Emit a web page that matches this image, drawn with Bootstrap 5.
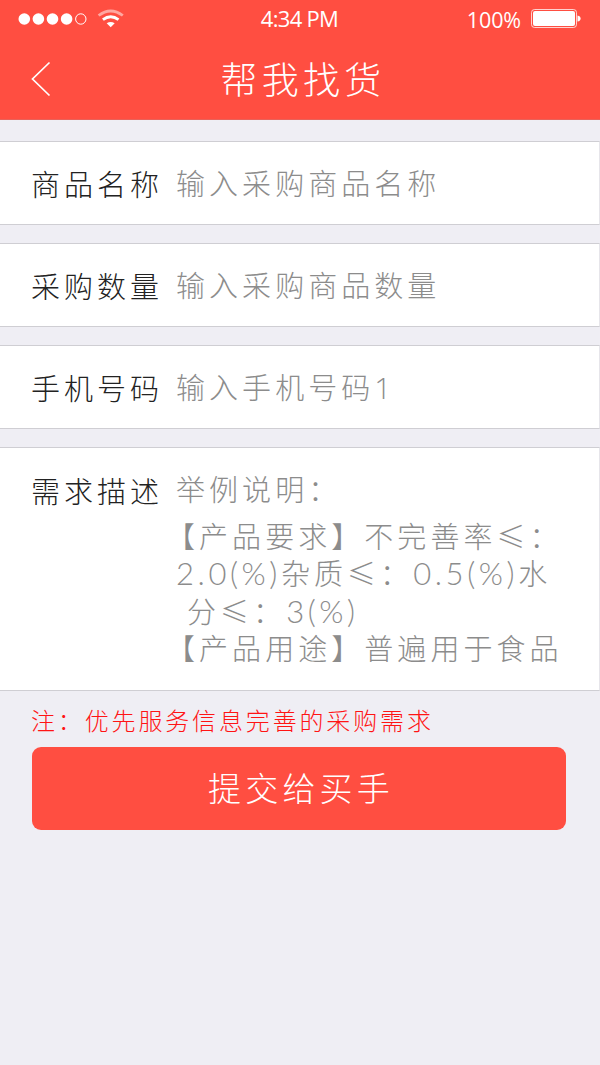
<!DOCTYPE html>
<html lang="zh-CN">
<head>
<meta charset="utf-8">
<meta name="viewport" content="width=device-width, initial-scale=1">
<title>帮我找货</title>
<link rel="stylesheet" href="https://cdn.jsdelivr.net/npm/bootstrap@5.3.0/dist/css/bootstrap.min.css">
<style>
body { background: #efeef4; font-family: "Noto Sans CJK SC", sans-serif; font-weight: 300; min-height: 1065px; overflow-x: hidden; }
.app-head { background: #ff4e41; height: 120px; border-bottom: 1px solid #e8625a; }
.status-bar { height: 38px; padding: 0 19px 0 18px; font: 400 22px/38px "Open Sans", "Noto Sans", sans-serif; }
.status-bar > div { flex: 1 1 0; }
.clock { font-size: 22px; letter-spacing: -.7px; line-height: 36px; height: 38px; }
.level { font-size: 21.5px; letter-spacing: -.1px; padding-top: 1px; }
.title-bar { height: 82px; padding: 0 28px 0 31px; }
.title-bar h1 { font-size: 37px; font-weight: 300; line-height: 80px; height: 82px; letter-spacing: 4.3px; padding-left: 3px; }
.side { width: 40px; }
.form-rows { padding-top: 21px; }
.field { background: #fff; border: 1px solid #cfced3; border-left: 0; border-right-color: #e6e5ea; height: 84px; margin-bottom: 18px; padding-left: 31px; font-size: 29px; letter-spacing: 4px; line-height: 82px; white-space: nowrap; }
.field-label { width: 145px; color: #222; flex: none; }
.hint { color: #8c8c8c; line-height: 80px; letter-spacing: 4.05px; }
.field-area { height: 244px; margin-bottom: 0; line-height: 40px; padding-top: 22px; }
.field-area .hint { line-height: 37.500px; }
.lead-line { margin-bottom: 9px; }
.hang { margin-left: -10px; }
.tail { padding-left: 11px; }
.latin { font-family: Lato, sans-serif; font-size: 31px; letter-spacing: 3.6px; line-height: 1; }
.one { font-family: "Open Sans", sans-serif; font-size: 30px; line-height: 1; }
.note { color: #ff1414; font-size: 24px; letter-spacing: 2.850px; line-height: 36px; padding: 11px 0 9px 31px; }
.btn-send, .btn-send:hover { background: #ff4e41; color: #fff; height: 83px; margin: 0 34px 0 32px; border: 0; border-radius: 9px; font-size: 33px; font-weight: 300; letter-spacing: 4.2px; width: 534px; padding: 0 0 2px 4px; }
</style>
</head>
<body>
<header class="app-head text-white">
  <div class="status-bar d-flex align-items-center">
    <div class="d-flex align-items-center">
      <svg width="110" height="26" viewBox="0 0 110 26" fill="#fff">
        <circle cx="6.3" cy="13" r="5.8"/><circle cx="20.4" cy="13" r="5.8"/><circle cx="34.5" cy="13" r="5.8"/><circle cx="48.6" cy="13" r="5.8"/>
        <circle cx="62.8" cy="13" r="5.2" fill="none" stroke="#fff" stroke-width="1"/>
        <g fill="none" stroke="#fff" stroke-width="2.8"><path d="M80.600 9.500Q92.700 .4 104.800 9.500" opacity=".5"/><path d="M84.900 13.700Q92.700 7.800 100.500 13.700"/></g>
        <path d="M88.700 17.300Q92.700 14.500 96.700 17.300L92.700 21.300Z"/>
      </svg>
    </div>
    <div class="clock text-center">4:34 PM</div>
    <div class="d-flex align-items-center justify-content-end">
      <span class="level me-2">100%</span>
      <svg width="52" height="22" viewBox="0 0 52 22"><rect x="2.500" y="1.500" width="45" height="18" rx="3" fill="none" stroke="#fff" stroke-opacity=".75"/><rect x="4" y="3" width="42" height="15" rx="2" fill="#fff"/><path d="M48.500 7.500Q51.600 8 51.600 10.500T48.500 13.500Z" fill="#fff"/></svg>
    </div>
  </div>
  <div class="title-bar d-flex justify-content-between align-items-center">
    <a class="side d-flex" href="#" aria-label="返回"><svg width="20" height="36" viewBox="0 0 20 36" fill="none" stroke="#fff" stroke-width="1.700"><path d="M18.500 1.500L1.500 18L18.500 34.500"/></svg></a>
    <h1 class="m-0">帮我找货</h1>
    <span class="side"></span>
  </div>
</header>
<main class="form-rows">
  <div class="field d-flex"><div class="field-label">商品名称</div><div class="hint">输入采购商品名称</div></div>
  <div class="field d-flex"><div class="field-label">采购数量</div><div class="hint">输入采购商品数量</div></div>
  <div class="field d-flex"><div class="field-label">手机号码</div><div class="hint">输入手机号码<span class="one">1</span></div></div>
  <div class="field field-area d-flex">
    <div class="field-label">需求描述</div>
    <div class="hint">
      <div class="lead-line">举例说明：</div>
      <div class="hang">【产品要求】不完善率≤：</div>
      <div><span class="latin">2.0(%)</span>杂质≤：<span class="latin">0.5(%)</span>水</div>
      <div class="tail">分≤：<span class="latin">3(%)</span></div>
      <div class="hang">【产品用途】普遍用于食品</div>
    </div>
  </div>
  <p class="note m-0">注：优先服务信息完善的采购需求</p>
  <button class="btn btn-send" type="button">提交给买手</button>
</main>
<script src="https://cdn.jsdelivr.net/npm/bootstrap@5.3.0/dist/js/bootstrap.bundle.min.js"></script>
</body>
</html>
